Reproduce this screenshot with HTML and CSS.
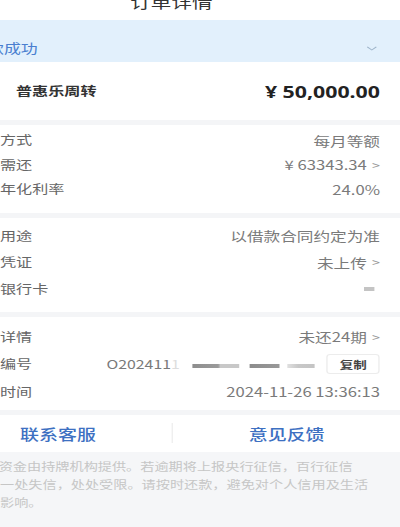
FILE: index.html
```html
<!DOCTYPE html>
<html lang="zh-CN">
<head>
<meta charset="utf-8">
<title>订单详情</title>
<link rel="stylesheet" href="styles.css">
</head>
<body>
<div class="page">
  <div class="header"><div class="title">订单详情</div></div>
  <div class="banner">
    <span class="banner-text">放款成功</span>
    <svg class="banner-chev" width="8" height="5" viewBox="0 0 8 5"><path d="M0.5 0.8 L4 4 L7.5 0.8" fill="none" stroke="#9db3c9" stroke-width="0.9"/></svg>
  </div>
  <div class="product">
    <span class="product-name">普惠乐周转</span>
    <span class="amount">¥ 50,000.00</span>
  </div>
  <div class="gap"></div>
  <div class="section s2">
    <div class="row"><span class="label">方式</span><span class="value">每月等额</span></div>
    <div class="row"><span class="label">需还</span><span class="value">¥ 63343.34<i class="arrow">&gt;</i></span></div>
    <div class="row"><span class="label">年化利率</span><span class="value">24.0%</span></div>
  </div>
  <div class="gap"></div>
  <div class="section s3">
    <div class="row"><span class="label">用途</span><span class="value">以借款合同约定为准</span></div>
    <div class="row"><span class="label">凭证</span><span class="value">未上传<i class="arrow">&gt;</i></span></div>
    <div class="row"><span class="label">银行卡</span><span class="value"><span class="card-blur"></span></span></div>
  </div>
  <div class="gap"></div>
  <div class="section s4">
    <div class="row"><span class="label">详情</span><span class="value">未还24期<i class="arrow">&gt;</i></span></div>
    <div class="row">
      <span class="label">编号</span>
      <span class="order">
        <span class="order-no">O202411<span class="fade">1</span></span>
        <span class="blur b1"></span>
        <span class="blur b2"></span>
        <span class="blur b3"></span>
        <span class="copy">复制</span>
      </span>
    </div>
    <div class="row"><span class="label">时间</span><span class="value">2024-11-26 13:36:13</span></div>
  </div>
  <div class="gap"></div>
  <div class="actions">
    <div class="act act-left">联系客服</div>
    <div class="divider"></div>
    <div class="act act-right">意见反馈</div>
  </div>
  <div class="notice">
    <p class="line l1">资金由持牌机构提供。若逾期将上报央行征信，百行征信</p>
    <p class="line">一处失信，处处受限。请按时还款，避免对个人信用及生活</p>
    <p class="line">影响。</p>
  </div>
</div>
</body>
</html>
```
FILE: styles.css
```css
html, body {
  margin: 0;
  padding: 0;
  background: #f5f6f8;
  overflow: hidden;
  height: 527px;
}
.page {
  width: 307.7px;
  transform: scaleX(1.3);
  transform-origin: 0 0;
  font-family: "Noto Sans CJK SC", "Noto Sans", sans-serif;
  overflow: hidden;
  background: #f5f6f8;
}
.header {
  height: 20px;
  background: #fff;
  display: flex;
  justify-content: center;
}
.title {
  font-size: 15.8px;
  line-height: 24px;
  margin-top: -10px;
  color: #333;
  padding-right: 44px;
}
.banner {
  height: 42px;
  background: #e2f0fc;
  box-sizing: border-box;
  padding: 18px 18px 4px 0;
  display: flex;
  justify-content: space-between;
  align-items: center;
}
.banner-text {
  font-size: 13px;
  line-height: 20px;
  color: #4a7fd0;
  margin-left: -23px;
}
.banner-chev {
  display: block;
  margin-top: 1px;
}
.product {
  height: 58px;
  background: #fff;
  display: flex;
  justify-content: space-between;
  align-items: center;
  padding: 0 15.4px 0 12.3px;
}
.product-name {
  font-size: 12.4px;
  font-weight: 700;
  color: #333;
}
.amount {
  font-size: 16.4px;
  font-weight: 700;
  color: #222;
  font-family: "Noto Sans", "Noto Sans CJK SC", sans-serif;
}
.gap {
  height: 5px;
  background: #f4f5f7;
}
.section {
  background: #fff;
  padding-right: 15.4px;
}
.s2 { padding-top: 3px; padding-bottom: 11px; }
.s2 .row { height: 24.5px; }
.s3 { padding-top: 5px; padding-bottom: 10px; }
.s3 .row { height: 26.5px; }
.s4 { padding-top: 6px; padding-bottom: 4px; }
.s4 .row { height: 27.5px; }
.row {
  display: flex;
  justify-content: space-between;
  align-items: center;
}
.label {
  font-size: 12.4px;
  color: #666;
}
.value {
  font-size: 12.8px;
  color: #7a7a7a;
  display: flex;
  align-items: center;
}
.arrow {
  font-style: normal;
  color: #999;
  font-size: 11px;
  margin-left: 4px;
}
.card-blur {
  width: 8px;
  height: 4px;
  background: #c4c4c4;
  margin-right: 4px;
}
.order {
  display: flex;
  align-items: center;
}
.order-no {
  font-size: 12.2px;
  color: #7a7a7a;
}
.fade {
  color: #ddd;
}
.blur {
  height: 4px;
  margin-top: 3px;
}
.b1 {
  width: 36px;
  margin-left: 10px;
  background: linear-gradient(90deg, #8e8e8e 0%, #9a9a9a 55%, #c8c8c8 60%, #c8c8c8 100%);
}
.b2 {
  width: 23px;
  margin-left: 8px;
  background: linear-gradient(90deg, #8c8c8c 0%, #999 100%);
}
.b3 {
  width: 21px;
  margin-left: 6px;
  background: linear-gradient(90deg, #e0e0e0 0%, #c8c8c8 40%, #c4c4c4 100%);
}
.copy {
  margin-left: 9px;
  width: 41px;
  height: 20px;
  box-sizing: border-box;
  border: 1px solid #ececec;
  border-radius: 3px;
  display: flex;
  align-items: center;
  justify-content: center;
  font-size: 10.4px;
  font-weight: 700;
  color: #444;
}
.actions {
  height: 37px;
  background: #fff;
  display: flex;
  align-items: center;
}
.act {
  font-size: 14.6px;
  color: #3d70c2;
  font-weight: 500;
}
.act-left {
  width: 132.3px;
  padding-left: 15.4px;
  box-sizing: border-box;
}
.divider {
  width: 1px;
  height: 20px;
  background: #eeeeee;
}
.act-right {
  flex: 1;
  text-align: center;
}
.notice {
  padding-top: 5px;
}
.line {
  margin: 0;
  font-size: 10.9px;
  line-height: 18px;
  color: #c6c6c6;
  white-space: nowrap;
}
.l1 {
  margin-left: -1px;
}
```
